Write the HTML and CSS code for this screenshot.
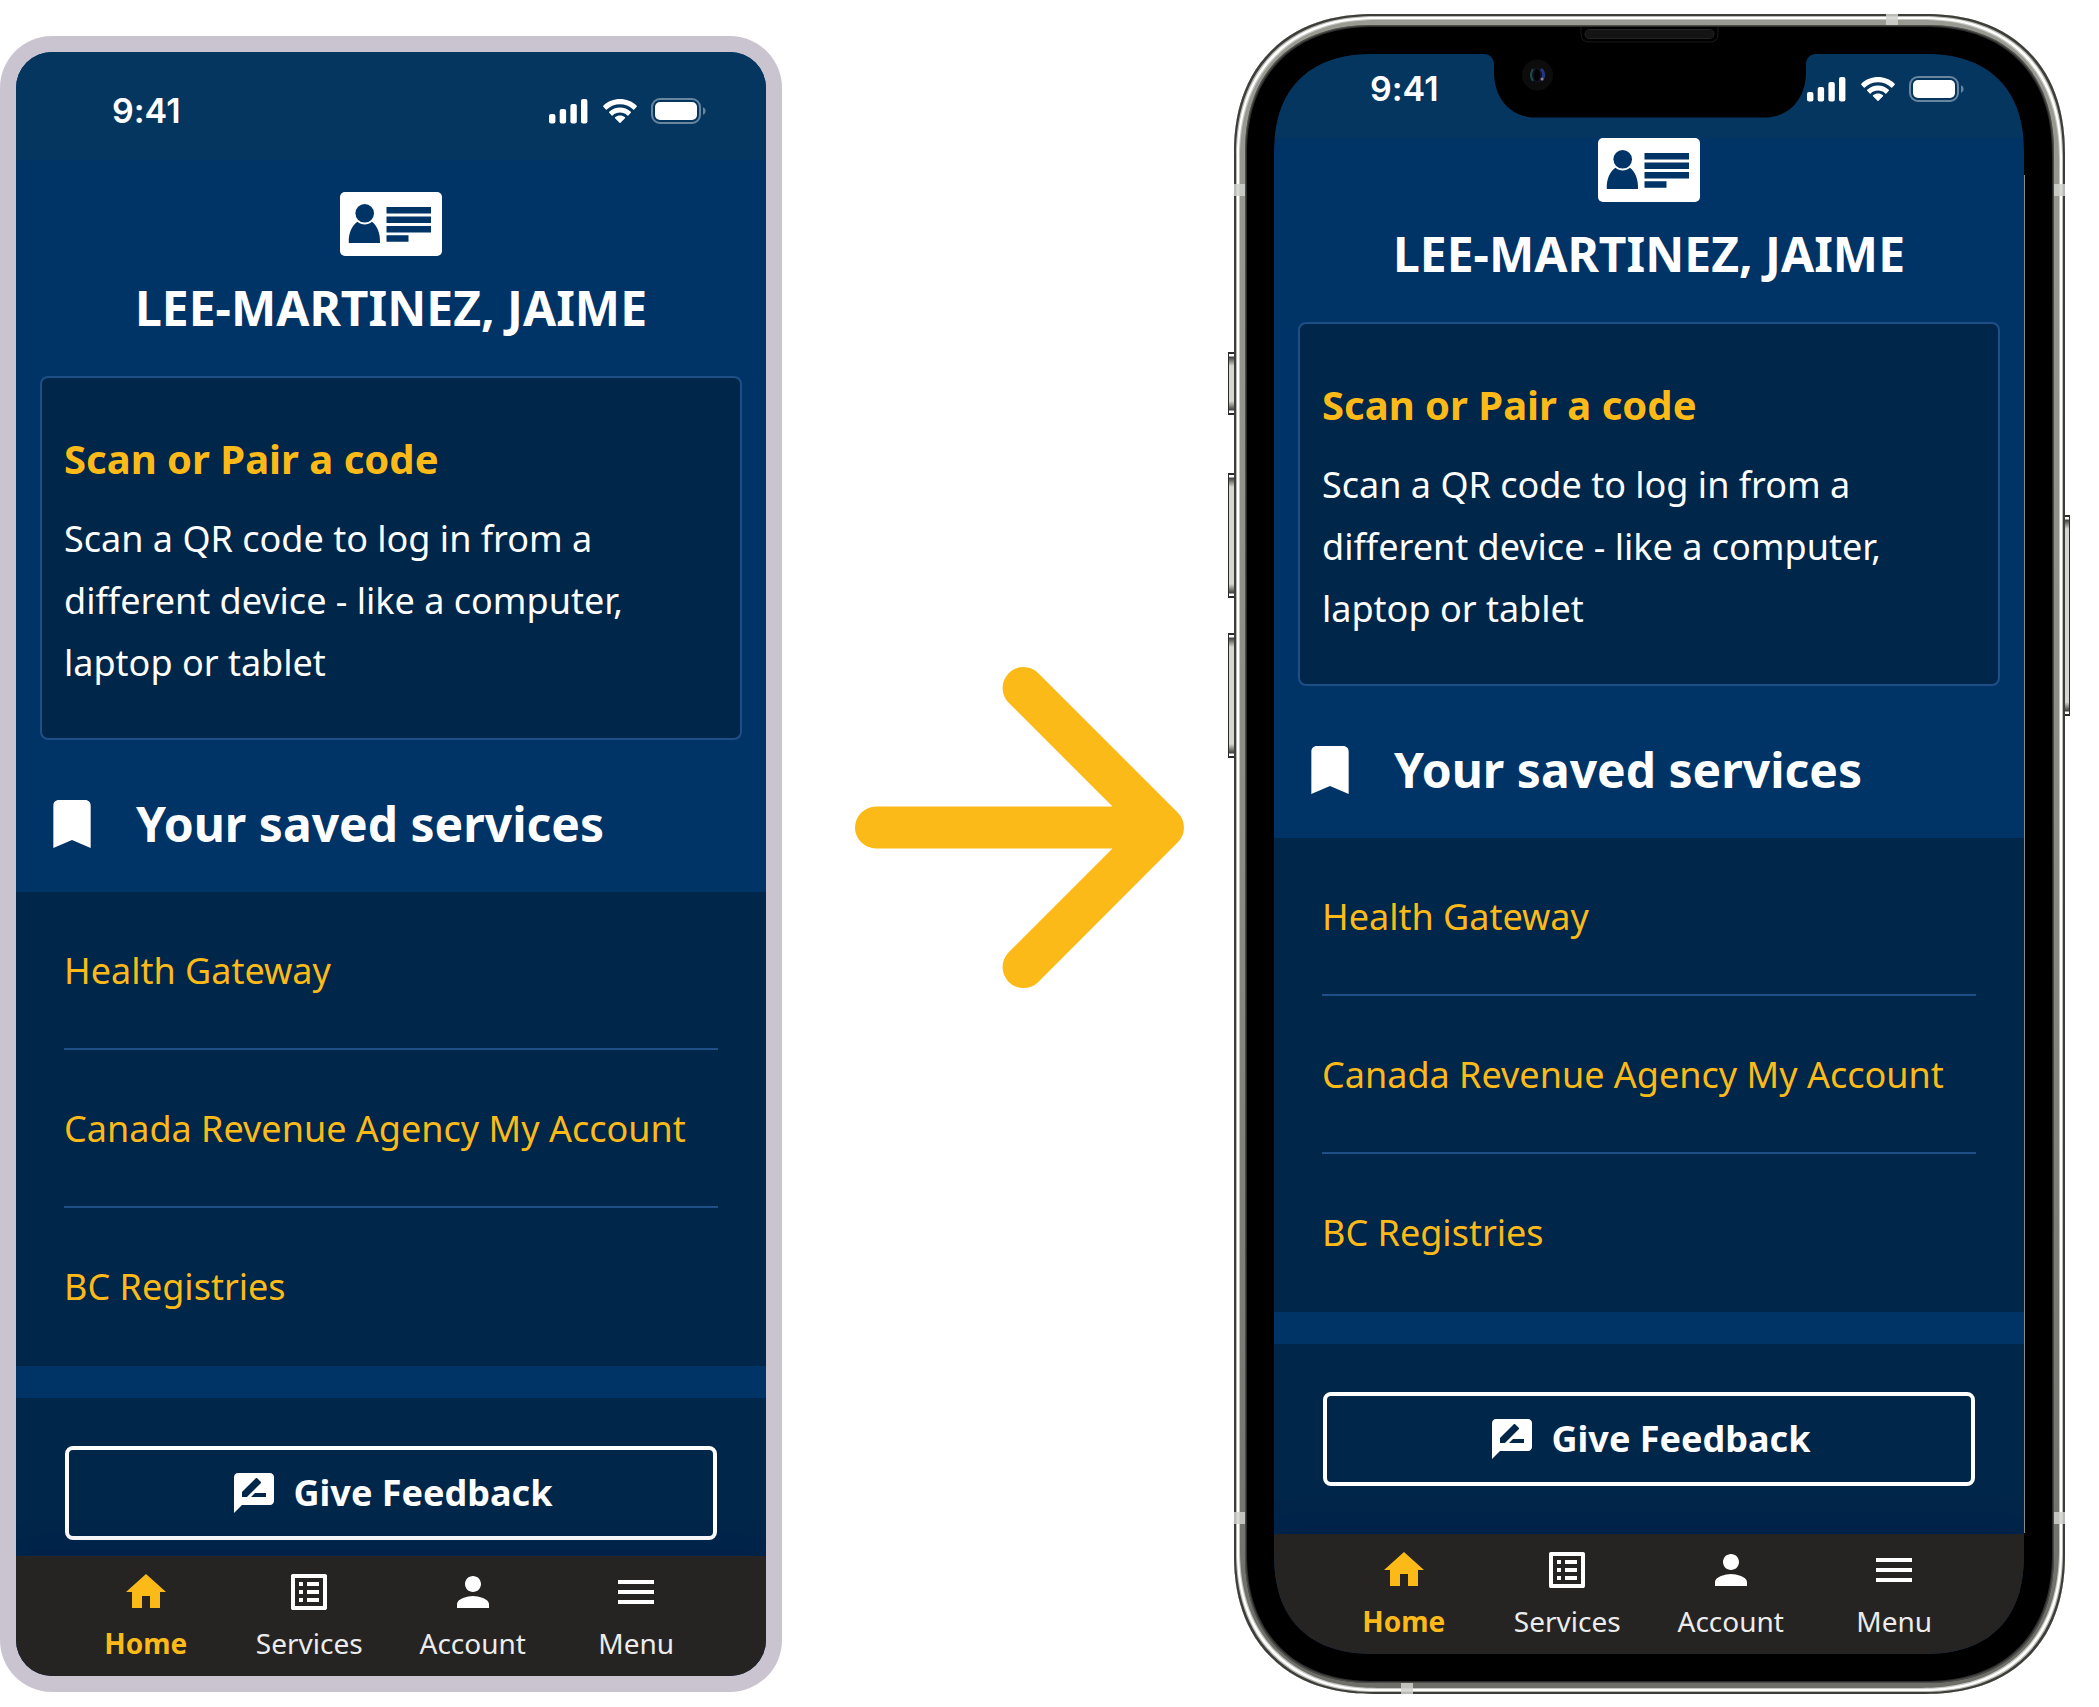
FILE: index.html
```html
<!DOCTYPE html>
<html lang="en">
<head>
<meta charset="utf-8">
<title>Wallet home</title>
<link rel="stylesheet" href="styles.css">
</head>
<body>
<svg class="sprite" aria-hidden="true">
  <symbol id="status" viewBox="0 0 158 28">
    <g fill="#fff">
      <rect x="0" y="17" width="6.4" height="9.4" rx="2"/>
      <rect x="10.7" y="12" width="6.4" height="14.4" rx="2"/>
      <rect x="21.4" y="7" width="6.4" height="19.4" rx="2"/>
      <rect x="32" y="2" width="6.4" height="24.4" rx="2"/>
      <path d="M71 7.2c4.900 0 9.600 1.900 13.200 5.200.3.300.7.300 1 0l2.500-2.600c.3-.3.300-.8 0-1.100C78.500-.1 63.500-.1 54.300 8.700c-.3.300-.3.800 0 1.100l2.500 2.600c.3.300.7.300 1 0C61.400 9.100 66.100 7.200 71 7.200z"/>
      <path d="M71 15.600c2.700 0 5.300 1 7.300 2.800.3.300.7.300 1 0l2.500-2.600c.3-.3.300-.8 0-1.100-6.100-5.700-15.500-5.700-21.600 0-.3.300-.3.800 0 1.100l2.500 2.600c.3.300.7.300 1 0 2-1.800 4.600-2.800 7.300-2.800z"/>
      <path d="M76 21.300c.3-.3.300-.8 0-1.100-2.900-2.400-7.100-2.400-10 0-.3.300-.3.800 0 1.100l4.500 4.500c.3.300.7.300 1 0z"/>
      <rect x="106" y="5" width="42" height="18" rx="5"/>
      <g opacity=".4">
        <path d="M154 10.200v7.600c1.600-.6 2.600-2.100 2.600-3.800s-1-3.200-2.600-3.800z"/>
      </g>
    </g>
    <rect x="103" y="2" width="48" height="24" rx="8" fill="none" stroke="#fff" stroke-width="2" opacity=".4"/>
  </symbol>
  <symbol id="id-card" viewBox="0 0 102 64">
    <rect width="102" height="64" rx="5" fill="#fff"/>
    <g fill="#003366">
      <circle cx="24.700" cy="21.300" r="9.300"/>
      <path d="M17.500 29.700c4 3.700 10.400 3.700 14.400 0C37 33.500 40.500 41 40 51H8.800C8.300 41 12 33.500 17.500 29.700z"/>
      <path d="M46.500 15H91v6.500H46.500zM46.500 24.500H91V31H46.500zM46.500 34H91v6.500H46.500zM46.500 43.200h22v6.500h-22z"/>
    </g>
  </symbol>
  <symbol id="bookmark" viewBox="0 0 24 24"><path fill="currentColor" d="M17 3H7c-1.100 0-1.990.9-1.990 2L5 21l7-3 7 3V5c0-1.100-.9-2-2-2z"/></symbol>
  <symbol id="feedback" viewBox="0 0 24 24"><path fill="currentColor" d="M20 2H4c-1.100 0-1.990.9-1.990 2L2 22l4-4h14c1.100 0 2-.9 2-2V4c0-1.100-.9-2-2-2zM6 14v-2.470l6.880-6.880c.2-.2.510-.2.710 0l1.770 1.770c.2.200.2.510 0 .710L8.470 14H6zm12 0h-7.500l2-2H18v2z"/></symbol>
  <symbol id="home" viewBox="0 0 24 24"><path fill="currentColor" d="M10 20v-6h4v6h5v-8h3L12 3 2 12h3v8z"/></symbol>
  <symbol id="services" viewBox="0 0 24 24"><path fill="currentColor" d="M19 5v14H5V5h14m1.100-2H3.900c-.5 0-.9.400-.9.900v16.200c0 .4.400.9.900.9h16.200c.4 0 .9-.5.900-.9V3.900c0-.5-.5-.9-.9-.9zM11 7h6v2h-6V7zm0 4h6v2h-6v-2zm0 4h6v2h-6v-2zM7 7h2v2H7V7zm0 4h2v2H7v-2zm0 4h2v2H7v-2z"/></symbol>
  <symbol id="account" viewBox="0 0 24 24"><path fill="currentColor" d="M12 12c2.210 0 4-1.790 4-4s-1.790-4-4-4-4 1.790-4 4 1.790 4 4 4zm0 2c-2.670 0-8 1.340-8 4v2h16v-2c0-2.660-5.330-4-8-4z"/></symbol>
  <symbol id="menu" viewBox="0 0 24 24"><path fill="currentColor" d="M3 18h18v-2H3v2zm0-5h18v-2H3v2zm0-7v2h18V6H3z"/></symbol>
</svg>

<main class="showcase">
  <section class="plain-frame" aria-label="App screen">
    <div class="screen">
      <div class="status-bar">
        <span class="time">9:41</span>
        <svg class="status-icons" aria-hidden="true"><use href="#status"/></svg>
      </div>
      <header class="profile">
        <svg class="id-card" aria-hidden="true"><use href="#id-card"/></svg>
        <h1>LEE-MARTINEZ, JAIME</h1>
      </header>
      <article class="scan-card">
        <h2>Scan or Pair a code</h2>
        <p>Scan a QR code to log in from a different device - like a computer, laptop or tablet</p>
      </article>
      <div class="section-title">
        <svg class="bookmark" aria-hidden="true"><use href="#bookmark"/></svg>
        <h2>Your saved services</h2>
      </div>
      <ul class="services">
        <li><a href="#health">Health Gateway</a></li>
        <li><a href="#cra">Canada Revenue Agency My Account</a></li>
        <li><a href="#registries">BC Registries</a></li>
      </ul>
      <div class="feedback">
        <button type="button"><svg class="icon" aria-hidden="true"><use href="#feedback"/></svg>Give Feedback</button>
      </div>
      <nav class="tabs">
        <a class="active" href="#home-tab"><svg class="icon" aria-hidden="true"><use href="#home"/></svg>Home</a>
        <a href="#services-tab"><svg class="icon" aria-hidden="true"><use href="#services"/></svg>Services</a>
        <a href="#account-tab"><svg class="icon" aria-hidden="true"><use href="#account"/></svg>Account</a>
        <a href="#menu-tab"><svg class="icon" aria-hidden="true"><use href="#menu"/></svg>Menu</a>
      </nav>
    </div>
  </section>

  <svg class="arrow" viewBox="0 0 330 322" aria-hidden="true">
    <path d="M21 161H309M169 21L309 161L169 301" fill="none" stroke="#fcba19" stroke-width="42" stroke-linecap="round" stroke-linejoin="round"/>
  </svg>

  <section class="device" aria-label="App screen on a phone">
    <span class="key key-mute"></span>
    <span class="key key-up"></span>
    <span class="key key-down"></span>
    <span class="key key-power"></span>
    <span class="band band-left-top"></span>
    <span class="band band-right-top"></span>
    <span class="band band-left-bottom"></span>
    <span class="band band-right-bottom"></span>
    <span class="band band-top"></span>
    <span class="band band-bottom"></span>
    <div class="bezel">
      <svg class="notch" viewBox="0 0 332 92" aria-hidden="true">
        <path d="M0 28C6 28 10 32 10 39V46C10 72 26 91.500 52 91.500H280C306 91.500 322 72 322 46V39C322 32 326 28 332 28V20H0z" fill="#000"/>
        <path d="M97 1V8Q97 16 105 16H226Q234 16 234 8V1" fill="none" stroke="#1b1b1b"/>
        <rect x="101" y="3.500" width="129" height="9" rx="4.500" fill="#141414" stroke="#242424"/>
        <circle cx="53.500" cy="49" r="15.500" fill="#0c0c0c"/>
        <circle cx="53.500" cy="49" r="7.500" fill="#10131f"/>
        <path d="M49 43q-4 6 0 12" fill="none" stroke="#1b4a47" stroke-width="2"/>
        <path d="M57 43q5 5 1 11" fill="none" stroke="#25357f" stroke-width="3"/>
        <ellipse cx="53" cy="49" rx="3" ry="6" fill="#020203"/>
        <circle cx="58" cy="53" r="1.500" fill="#8d78a8"/>
      </svg>
      <div class="screen">
        <div class="status-bar">
          <span class="time">9:41</span>
          <svg class="status-icons" aria-hidden="true"><use href="#status"/></svg>
        </div>
        <header class="profile">
          <svg class="id-card" aria-hidden="true"><use href="#id-card"/></svg>
          <h1>LEE-MARTINEZ, JAIME</h1>
        </header>
        <article class="scan-card">
          <h2>Scan or Pair a code</h2>
          <p>Scan a QR code to log in from a different device - like a computer, laptop or tablet</p>
        </article>
        <div class="section-title">
          <svg class="bookmark" aria-hidden="true"><use href="#bookmark"/></svg>
          <h2>Your saved services</h2>
        </div>
        <ul class="services">
          <li><a href="#health">Health Gateway</a></li>
          <li><a href="#cra">Canada Revenue Agency My Account</a></li>
          <li><a href="#registries">BC Registries</a></li>
        </ul>
        <div class="feedback">
          <button type="button"><svg class="icon" aria-hidden="true"><use href="#feedback"/></svg>Give Feedback</button>
        </div>
        <nav class="tabs">
          <a class="active" href="#home-tab"><svg class="icon" aria-hidden="true"><use href="#home"/></svg>Home</a>
          <a href="#services-tab"><svg class="icon" aria-hidden="true"><use href="#services"/></svg>Services</a>
          <a href="#account-tab"><svg class="icon" aria-hidden="true"><use href="#account"/></svg>Account</a>
          <a href="#menu-tab"><svg class="icon" aria-hidden="true"><use href="#menu"/></svg>Menu</a>
        </nav>
      </div>
    </div>
  </section>
</main>
</body>
</html>
```
FILE: styles.css
```css
:root {
  --blue: #003366;
  --navy: #00264a;
  --line: #1f4f87;
  --gold: #fcba19;
}

* { box-sizing: border-box; }

body {
  margin: 0;
  background: #fff;
  color: #fff;
  font-family: "Noto Sans", sans-serif;
  font-size: 36px;
  font-variant-ligatures: none;
}

h1, h2, p, ul { margin: 0; padding: 0; }
svg { display: block; flex: none; }
a { color: inherit; text-decoration: none; }

.sprite { position: absolute; width: 0; height: 0; }

.showcase {
  display: grid;
  grid-template-columns: minmax(0, 782fr) minmax(0, 352fr) minmax(0, 831fr);
  column-gap: 50px;
  align-items: start;
  padding: 14px 34px 13px 0;
}

.arrow {
  width: 100%;
  padding-left: 23px;
  align-self: center;
  margin-bottom: 52px;
}

/* Frames */
.plain-frame {
  margin-top: 22px;
  padding: 16px;
  border-radius: 52px;
  background: #cac4d0;
}

.screen {
  display: flex;
  flex-direction: column;
  overflow: hidden;
  border-radius: 36px;
  background: var(--blue);
}

.device {
  position: relative;
  padding: 11px;
  border-radius: 140px;
  corner-shape: superellipse(1.18);
  background: linear-gradient(#999b92, #8a8c83 50%, #6d6e68);
  box-shadow:
    inset 0 0 0 2px #3d3e39,
    inset 0 0 0 3px #b9bab4,
    inset 0 0 0 5px #fff,
    inset 0 0 0 6px #c5c6c0;
}

.bezel {
  position: relative;
  padding: 29px 30px 29px 29px;
  border-radius: 129px;
  corner-shape: superellipse(1.2);
  /* thin highlight along the straight part of the glass edge */
  background: linear-gradient(#8b8b88, #8b8b88) right 29px center / 1px calc(100% - 300px) no-repeat #000;
  box-shadow: inset 0 0 0 1px #4c4c49, inset 0 0 0 2px #2c2c2c;
}

.device .screen {
  border-radius: 102px;
  corner-shape: superellipse(1.27);
}

.notch {
  position: absolute;
  top: 1px;
  left: 50%;
  width: 332px;
  height: 92px;
  margin-left: -166px;
}

.key {
  position: absolute;
  left: -6px;
  width: 6px;
  height: 125px;
  border: 1px solid #2b2b29;
  border-width: 2px 0 2px 1px;
  background: linear-gradient(#fff 2px, #3e3f3b 3px, #d6d7d2 12px, #d6d7d2 calc(100% - 12px), #3e3f3b calc(100% - 3px), #fff calc(100% - 2px));
}
.key-mute { top: 338px; height: 63px; }
.key-up { top: 459px; }
.key-down { top: 619px; }
.key-power {
  top: 501px;
  left: auto;
  right: -5px;
  width: 5px;
  height: 201px;
  border-width: 2px 1px 2px 0;
}

.band {
  position: absolute;
  width: 11px;
  height: 12px;
  background: rgb(208 209 204 / 85%);
}
.band-left-top { top: 170px; left: 0; }
.band-right-top { top: 170px; right: 0; }
.band-left-bottom { bottom: 170px; left: 0; }
.band-right-bottom { bottom: 170px; right: 0; }
.band-top { top: 0; right: 167px; width: 12px; height: 11px; }
.band-bottom { bottom: 0; left: 167px; width: 12px; height: 11px; }

/* App screen */
.status-bar {
  display: flex;
  align-items: center;
  justify-content: space-between;
  height: 108px;
  padding: 10px 59px 0 96px;
  background: #053660;
}
.device .status-bar { height: 84px; padding-top: 0; padding-bottom: 14px; }

.time {
  font-family: Inter, sans-serif;
  font-size: 34px;
  font-weight: 600;
  line-height: 40px;
}
.status-icons { width: 158px; height: 28px; }

.profile {
  display: flex;
  flex-direction: column;
  align-items: center;
  gap: 16px;
  padding: 32px 24px;
}
.device .profile { padding-top: 0; }
.id-card { width: 102px; height: 64px; }

h1, .section-title h2 {
  font-size: 48px;
  font-weight: 700;
  line-height: 72px;
}

.scan-card {
  margin: 0 24px;
  padding: 49px 22px 44px;
  border: 2px solid var(--line);
  border-radius: 8px;
  background: var(--navy);
}
.scan-card h2 {
  margin-bottom: 17px;
  color: var(--gold);
  font-size: 40px;
  line-height: 64px;
}
.scan-card p { line-height: 62px; }

.section-title {
  display: flex;
  align-items: center;
  gap: 32px;
  padding: 48px 24px 32px;
}
.bookmark { width: 64px; height: 64px; }

.services {
  padding: 0 48px;
  background: var(--navy);
  color: var(--gold);
  list-style: none;
}
.services li { border-bottom: 2px solid var(--line); }
.services li:last-child { border-color: transparent; }
.services a {
  display: block;
  padding: 49px 0 47px;
  line-height: 60px;
}

.feedback {
  margin-top: 32px;
  padding: 48px 49px 16px;
  background: var(--navy);
}
.device .feedback { padding-bottom: 48px; }

.feedback button {
  display: flex;
  align-items: center;
  justify-content: center;
  gap: 16px;
  width: 100%;
  height: 94px;
  border: 4px solid #fff;
  border-radius: 8px;
  background: none;
  color: #fff;
  font: 700 36px/60px "Noto Sans", sans-serif;
}
.icon { width: 48px; height: 48px; }

.tabs {
  display: grid;
  grid-template-columns: repeat(4, 1fr);
  height: 120px;
  padding: 12px 48px 0;
  background: #252423;
  box-shadow: 0 -4px 32px rgb(0 0 70 / 20%);
}
.tabs a {
  display: flex;
  flex-direction: column;
  align-items: center;
  gap: 7px;
  color: #ececec;
  font-size: 28px;
  line-height: 40px;
}
.tabs .icon { color: #fff; }
.tabs .active, .tabs .active .icon { color: var(--gold); }
.tabs .active { font-weight: 700; }
```
